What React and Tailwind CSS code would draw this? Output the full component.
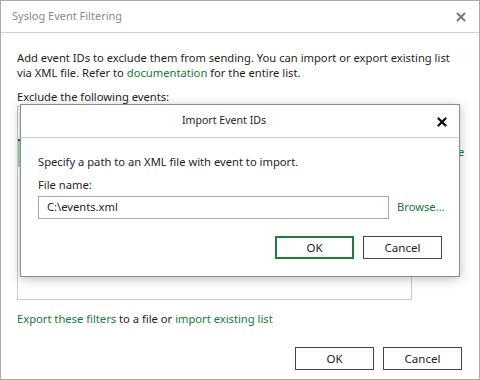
import { X } from 'lucide-react'

const font = { fontFamily: '"Noto Sans", "Liberation Sans", sans-serif' }

function Btn({ children, primary }) {
    return (
        <button
            className={
                primary
                    ? 'w-[79px] h-[23px] border-2 border-[#1e7e3e] bg-white text-[11.5px] text-[#222] flex items-center justify-center'
                    : 'w-[79px] h-[23px] border border-[#444] bg-white text-[11.5px] text-[#222] flex items-center justify-center'
            }
        >
            {children}
        </button>
    )
}

export default function App() {
    return (
        <div className="w-[480px] h-[380px] bg-white border border-[#a9a9a9] relative flex flex-col text-[11.2px] text-[#1e1e1e]" style={font}>
            {/* Title bar */}
            <div className="h-[32px] border-b border-[#cfcfcf] flex items-center justify-between pl-[11px] pr-[11px] shrink-0">
                <span className="text-[11px] text-[#8a8a8a]">Syslog Event Filtering</span>
                <X size={14} strokeWidth={3.5} className="text-[#7a7a7a]" />
            </div>

            {/* Body */}
            <div className="px-[16px] pt-[17px] flex flex-col flex-1">
                <p className="leading-[15px]">
                    Add event IDs to exclude them from sending. You can import or export existing list via XML file. Refer to{' '}
                    <span className="text-[#137b36]">documentation</span> for the entire list.
                </p>
                <p className="mt-[9px] leading-[15px]">Exclude the following events:</p>

                <div className="flex mt-[2px] gap-[10px]">
                    <div className="w-[395px] h-[194px] border border-[#cccccc] pt-[32px] shrink-0">
                        <div className="h-[28px] w-[3px] bg-[#a9d9b9] border-t-2 border-[#137b36]"></div>
                    </div>
                    <div className="pt-[38px] text-[#137b36]">Remove</div>
                </div>

                <p className="mt-[11px] leading-[15px]">
                    <span className="text-[#137b36]">Export these filters</span> to a file or{' '}
                    <span className="text-[#137b36]">import existing list</span>
                </p>

                <div className="flex justify-end gap-[9px] mt-[21px] pr-[1px]">
                    <Btn>OK</Btn>
                    <Btn>Cancel</Btn>
                </div>
            </div>

            {/* Import dialog (modal) */}
            <div className="absolute left-[19px] top-[103px] w-[440px] h-[173px] bg-white border border-[#8c8c8c] shadow-[0_2px_10px_rgba(0,0,0,0.25)] flex flex-col">
                <div className="h-[33px] border-b border-[#d0d0d0] flex items-center justify-center pr-[32px] relative shrink-0">
                    <span className="text-[10.6px] text-[#1e1e1e]">Import Event IDs</span>
                    <X size={14} strokeWidth={4} className="absolute right-[10px] top-[10px] text-[#111]" />
                </div>
                <div className="px-[17px] pt-[16px] flex flex-col">
                    <p className="leading-[15px]">Specify a path to an XML file with event to import.</p>
                    <p className="mt-[8px] leading-[15px]">File name:</p>
                    <div className="flex items-center mt-[4px] gap-[8px]">
                        <div className="w-[351px] h-[23px] border border-[#aaaaaa] flex items-center pl-[8px] shrink-0">C:\events.xml</div>
                        <span className="text-[#137b36]">Browse...</span>
                    </div>
                    <div className="flex justify-end gap-[9px] mt-[17px]">
                        <Btn primary>OK</Btn>
                        <Btn>Cancel</Btn>
                    </div>
                </div>
            </div>
        </div>
    )
}
